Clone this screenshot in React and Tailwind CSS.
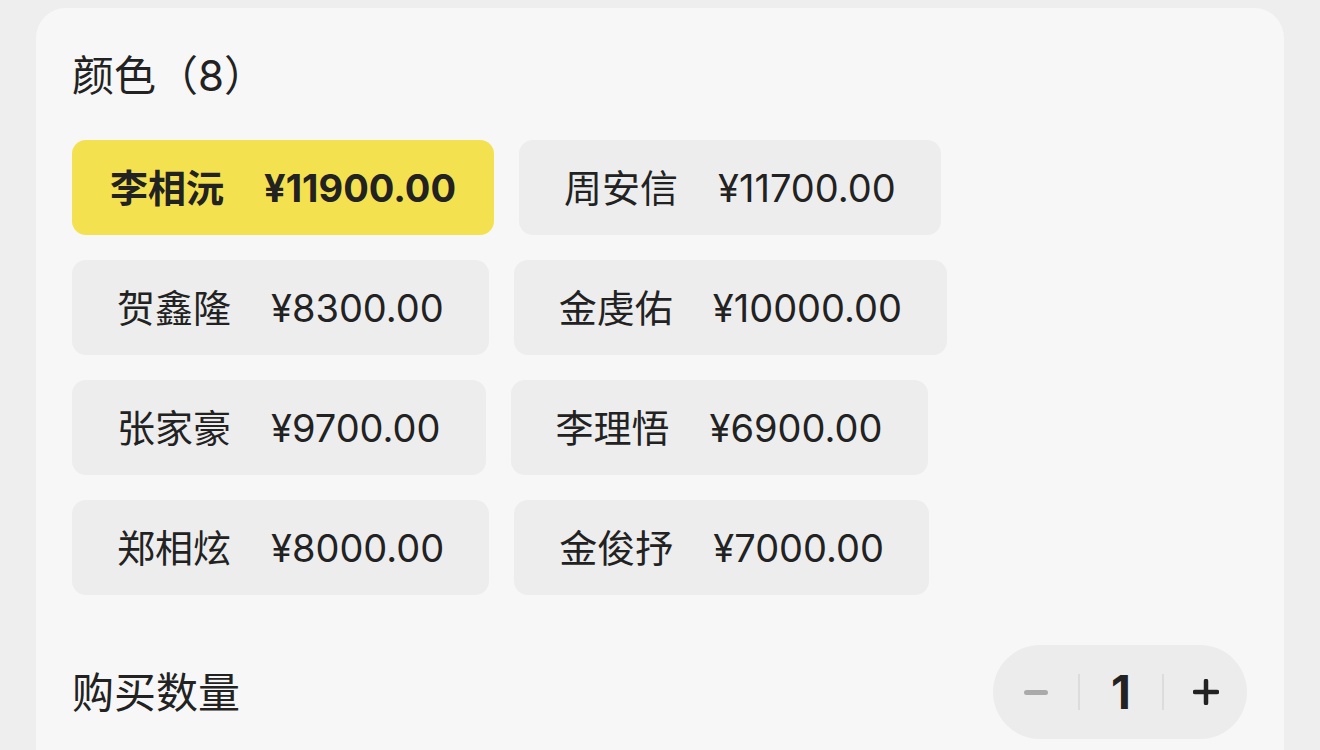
import React from 'react';

const options = [
  [
    { name: '李相沅', price: '¥11900.00', selected: true },
    { name: '周安信', price: '¥11700.00' },
  ],
  [
    { name: '贺鑫隆', price: '¥8300.00' },
    { name: '金虔佑', price: '¥10000.00' },
  ],
  [
    { name: '张家豪', price: '¥9700.00' },
    { name: '李理悟', price: '¥6900.00' },
  ],
  [
    { name: '郑相炫', price: '¥8000.00' },
    { name: '金俊抒', price: '¥7000.00' },
  ],
];

const font = { fontFamily: 'Inter, "Noto Sans CJK SC", sans-serif' };

const Chip = ({ name, price, selected }) => (
  <button
    className={`h-[95px] flex items-center gap-[40px] rounded-[14px] text-[38px] leading-none text-[#222] ${
      selected ? 'bg-[#f4e14f] font-bold px-[38px]' : 'bg-[#ededed] font-normal px-[45px]'
    }`}
  >
    <span>{name}</span>
    <span>{price}</span>
  </button>
);

export default function App() {
  return (
    <div className="h-[750px] overflow-hidden bg-[#eeeeee] pt-2 px-9" style={font}>
      <div className="h-[800px] bg-[#f7f7f7] rounded-t-[30px] px-9 pt-[40px]">
        <h2 className="text-[42px] leading-[56px] text-[#222]">颜色（8）</h2>

        <div className="mt-[36px] flex flex-col gap-[25px]">
          {options.map((row, i) => (
            <div key={i} className="flex gap-[25px]">
              {row.map((o) => (
                <Chip key={o.name} {...o} />
              ))}
            </div>
          ))}
        </div>

        <div className="mt-[50px] flex items-center justify-between">
          <span className="text-[42px] text-[#222]">购买数量</span>
          <div className="h-[94px] w-[254px] mr-[1px] rounded-full bg-[#ececec] flex items-center">
            <div className="w-[85px] flex justify-center">
              <div className="w-[24px] h-[5px] rounded-full bg-[#aaaaaa]" />
            </div>
            <div className="w-[86px] h-[36px] border-x-2 border-[#dcdcdc] flex items-center justify-center">
              <span className="text-[46px] font-bold text-[#222] leading-none">1</span>
            </div>
            <div className="w-[83px] flex justify-center">
              <svg width="26" height="26" viewBox="0 0 26 26">
                <path d="M13 2v22M2 13h22" stroke="#222" strokeWidth="4.5" strokeLinecap="round" />
              </svg>
            </div>
          </div>
        </div>
      </div>
    </div>
  );
}
